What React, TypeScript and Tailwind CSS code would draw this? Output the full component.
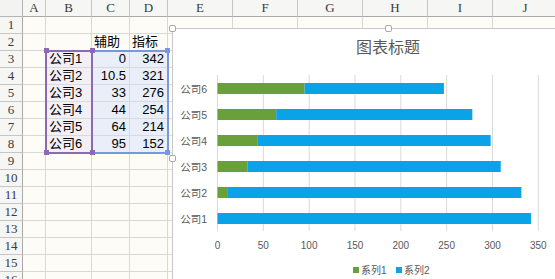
import React from "react";

// 表格数据
const letters = ["A", "B", "C", "D", "E", "F", "G", "H", "I", "J"];
const companies = [
  { name: "公司1", aux: 0, val: 342 },
  { name: "公司2", aux: 10.5, val: 321 },
  { name: "公司3", aux: 33, val: 276 },
  { name: "公司4", aux: 44, val: 254 },
  { name: "公司5", aux: 64, val: 214 },
  { name: "公司6", aux: 95, val: 152 },
];

const GREEN = "#6aa03a";
const BLUE = "#0aa3e8";

function Cell({ row, col }: { row: number; col: number }) {
  const base =
    "border-r border-b border-[#d9d9d6] flex items-center overflow-hidden whitespace-nowrap text-[13px] text-black";
  const inData = row >= 3 && row <= 8;
  const c = inData ? companies[row - 3] : null;

  if (col === 1 && c) {
    return <div className={`${base} bg-[#f3eff7] pl-[3px]`}>{c.name}</div>;
  }
  if ((col === 2 || col === 3) && c) {
    return (
      <div className={`${base} bg-[#e9eef8] justify-end pr-[3px]`}>
        {col === 2 ? c.aux : c.val}
      </div>
    );
  }
  if (row === 2 && col === 2) {
    return <div className={`${base} bg-[#fdfcf7] pl-[2px]`}>辅助</div>;
  }
  if (row === 2 && col === 3) {
    return <div className={`${base} bg-[#fdfcf7] pl-[2px]`}>指标</div>;
  }
  return <div className={`${base} bg-[#fdfcf7]`} />;
}

function BarChart() {
  // 坐标换算：x0 为数值 0 的位置
  const x0 = 44.5;
  const k = 0.9166;
  const ticks = [0, 50, 100, 150, 200, 250, 300, 350];
  const order = [...companies].reverse(); // 公司6 在最上面

  return (
    <svg width="430" height="225" className="block">
      {ticks.map((t) => (
        <line
          key={t}
          x1={x0 + t * k}
          x2={x0 + t * k}
          y1={17}
          y2={173}
          stroke="#d9d9d9"
          strokeWidth="1"
        />
      ))}
      {order.map((c, i) => {
        const y = 25 + 26 * i;
        return (
          <g key={c.name}>
            <text
              x={34}
              y={y + 5.5}
              textAnchor="end"
              dominantBaseline="central"
              fontSize="10.5"
              fill="#595959"
            >
              {c.name}
            </text>
            <rect x={x0} y={y} width={c.aux * k} height={11} fill={GREEN} />
            <rect
              x={x0 + c.aux * k}
              y={y}
              width={c.val * k}
              height={11}
              fill={BLUE}
            />
          </g>
        );
      })}
      {ticks.map((t) => (
        <text
          key={t}
          x={x0 + t * k}
          y={187}
          textAnchor="middle"
          dominantBaseline="central"
          fontSize="10"
          fill="#595959"
        >
          {t}
        </text>
      ))}
      {/* 图例 */}
      <rect x={180} y={209} width={6} height={6} fill={GREEN} />
      <text x={188} y={212} dominantBaseline="central" fontSize="10" fill="#595959">
        系列1
      </text>
      <rect x={223} y={209} width={6} height={6} fill={BLUE} />
      <text x={231} y={212} dominantBaseline="central" fontSize="10" fill="#595959">
        系列2
      </text>
    </svg>
  );
}

export default function App() {
  const rows = Array.from({ length: 16 }, (_, i) => i + 1);

  return (
    <div className="relative w-[555px] h-[279px] overflow-hidden bg-white font-['Liberation_Sans','Noto_Sans_CJK_SC',sans-serif]">
      <div className="grid grid-cols-[23px_23px_46px_38px_38px_65px_65px_65px_65px_65px_65px] auto-rows-[17px] w-[558px]">
        {/* 列标题 */}
        <div className="bg-[#f3f3f1] border-r border-b border-[#b5b5b5]" />
        {letters.map((l) => (
          <div
            key={l}
            className="bg-[#f6f6f4] border-r border-b border-[#c6c6c4] border-b-[#aaaaaa] flex items-center justify-center text-[13px] text-[#3a3a3a] font-['Liberation_Serif',serif]"
          >
            {l}
          </div>
        ))}
        {rows.map((r) => (
          <React.Fragment key={r}>
            <div className="bg-[#f6f6f4] border-r border-b border-[#c6c6c4] border-r-[#aaaaaa] flex items-center justify-center text-[13px] text-[#3a3a3a] font-['Liberation_Serif',serif]">
              {r}
            </div>
            {letters.map((l, ci) => (
              <Cell key={l} row={r} col={ci} />
            ))}
          </React.Fragment>
        ))}
      </div>

      {/* 选区边框 */}
      <div className="absolute left-[91px] top-[50px] w-[78px] h-[104px] border-2 border-[#7897dc]" />
      <div className="absolute left-[45px] top-[50px] w-[48px] h-[104px] border-2 border-[#8b69b3]" />
      <div className="absolute left-[44px] top-[48px] w-[5px] h-[5px] bg-[#8b69b3]" />
      <div className="absolute left-[90px] top-[48px] w-[5px] h-[5px] bg-[#8b69b3]" />
      <div className="absolute left-[44px] top-[150px] w-[5px] h-[5px] bg-[#8b69b3]" />
      <div className="absolute left-[90px] top-[150px] w-[5px] h-[5px] bg-[#8b69b3]" />
      <div className="absolute left-[165px] top-[48px] w-[5px] h-[5px] bg-[#7897dc]" />
      <div className="absolute left-[165px] top-[150px] w-[5px] h-[5px] bg-[#7897dc]" />

      {/* 图表 */}
      <div className="absolute left-[172px] top-[28px] w-[432px] h-[260px] bg-white border border-[#c9c9c9]">
        <div className="pt-[9px] h-[29px] leading-[20px] text-center text-[16px] text-[#595959]">
          图表标题
        </div>
        <BarChart />
      </div>
      <div className="absolute left-[169px] top-[25px] w-[7px] h-[7px] bg-white border border-[#a8a8a8] rounded-[2px]" />
      <div className="absolute left-[385px] top-[25px] w-[7px] h-[7px] bg-white border border-[#a8a8a8] rounded-[2px]" />
      <div className="absolute left-[169px] top-[155px] w-[7px] h-[7px] bg-white border border-[#a8a8a8] rounded-[2px]" />
    </div>
  );
}
